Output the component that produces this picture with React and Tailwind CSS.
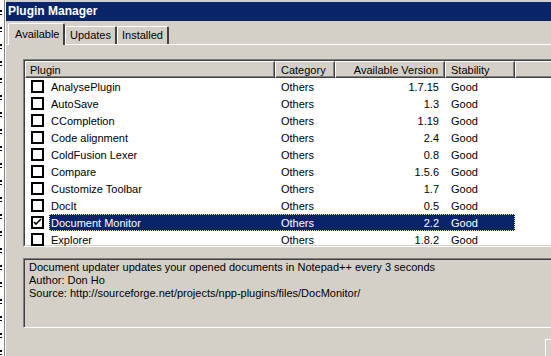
const plugins = [
  { name: "AnalysePlugin", version: "1.7.15" },
  { name: "AutoSave", version: "1.3" },
  { name: "CCompletion", version: "1.19" },
  { name: "Code alignment", version: "2.4" },
  { name: "ColdFusion Lexer", version: "0.8" },
  { name: "Compare", version: "1.5.6" },
  { name: "Customize Toolbar", version: "1.7" },
  { name: "DocIt", version: "0.5" },
  { name: "Document Monitor", version: "2.2", checked: true, selected: true },
  { name: "Explorer", version: "1.8.2" },
];

function CheckBox({ checked }) {
  return (
    <div className="w-[13px] h-[13px] border-2 border-black bg-white flex items-center justify-center">
      {checked && (
        <svg width="9" height="9" viewBox="0 0 9 9">
          <path d="M1 4 L3 6 L8 1" stroke="#000" strokeWidth="1.6" fill="none" />
        </svg>
      )}
    </div>
  );
}

function HeaderCell({ children, className = "" }) {
  return (
    <div
      className={
        "h-full flex items-center pt-[1px] border-t border-l border-t-white border-l-white border-r border-b border-r-[#404040] border-b-[#404040] shadow-[inset_-1px_-1px_0_#808080] " +
        className
      }
    >
      {children}
    </div>
  );
}

function Tab({ label, active }) {
  return active ? (
    <div className="relative z-10 h-[22px] -mb-[1px] w-[57px] bg-[#d4d0c8] border-t border-l border-white border-r-2 border-r-[#404040] rounded-t-[2px] flex items-start pt-[4px] pl-[6px]">
      {label}
    </div>
  ) : (
    <div className="h-[18px] bg-[#d4d0c8] border-t border-l border-white border-r-2 border-r-[#404040] rounded-t-[2px] flex items-center px-[4px]">
      {label}
    </div>
  );
}

export default function App() {
  return (
    <div
      className="w-[551px] h-[356px] overflow-hidden bg-[#d4d0c8] flex text-[11px] leading-[13px] text-black"
      style={{ fontFamily: '"Liberation Sans", Arial, sans-serif' }}
    >
      <div className="w-[4px] shrink-0 bg-white bg-[repeating-linear-gradient(to_bottom,transparent_0,transparent_10px,#000_10px,#000_12px,transparent_12px,transparent_14px,#000_14px,#000_15px,transparent_15px,transparent_17px)] bg-[length:2px_100%] bg-no-repeat" />
      <div className="w-[1px] shrink-0 bg-[#808080]" />
      <div className="w-[1px] shrink-0 bg-white" />
      <div className="flex-1 flex flex-col min-w-0 pt-[2px]">
        <div className="h-[19px] bg-[#0a246a] text-white font-bold text-[12px] flex items-center pl-[2px] shrink-0">
          Plugin Manager
        </div>
        <div className="h-[23px] flex items-end pl-[2px] shrink-0">
          <Tab label="Available" active />
          <Tab label="Updates" />
          <Tab label="Installed" />
        </div>
        <div className="border-t border-white flex-1 flex flex-col pl-[17px] pt-[14px]">
          <div className="w-[560px] h-[188px] border-t border-l border-[#808080] border-b border-r border-b-white border-r-white shrink-0">
            <div className="h-full border-t border-l border-[#404040] border-b border-r border-b-[#d4d0c8] border-r-[#d4d0c8] bg-white flex flex-col">
              <div className="h-[17px] flex shrink-0 bg-[#d4d0c8]">
                <HeaderCell className="w-[250px] pl-[4px]">Plugin</HeaderCell>
                <HeaderCell className="w-[60px] pl-[5px]">Category</HeaderCell>
                <HeaderCell className="w-[110px] justify-end pr-[6px]">Available Version</HeaderCell>
                <HeaderCell className="w-[70px] pl-[5px]">Stability</HeaderCell>
                <HeaderCell className="flex-1" />
              </div>
              {plugins.map((p) => (
                <div key={p.name} className="h-[17px] flex items-center shrink-0">
                  <div className="w-[24px] h-full flex items-center pl-[6px] shrink-0">
                    <CheckBox checked={p.checked} />
                  </div>
                  <div
                    className={
                      "w-[466px] h-full flex items-center pt-[1px] " +
                      (p.selected
                        ? "bg-[#0a246a] text-white outline-1 outline-dotted outline-[#e8e0a0] -outline-offset-1"
                        : "")
                    }
                  >
                    <div className="w-[226px] pl-[2px]">{p.name}</div>
                    <div className="w-[60px] pl-[6px]">Others</div>
                    <div className="w-[110px] text-right pr-[6px]">{p.version}</div>
                    <div className="w-[70px] pl-[6px]">Good</div>
                  </div>
                </div>
              ))}
            </div>
          </div>
          <div className="mt-[11px] w-[560px] h-[70px] border-t border-l border-[#808080] border-b border-r border-b-white border-r-white shrink-0">
            <div className="h-full border-t border-l border-[#404040] pl-[4px] pt-[1px]">
              <div>Document updater updates your opened documents in Notepad++ every 3 seconds</div>
              <div>Author: Don Ho</div>
              <div>Source: http://sourceforge.net/projects/npp-plugins/files/DocMonitor/</div>
            </div>
          </div>
          <div className="mt-[11px] ml-[522px] w-[40px] h-[20px] border-t border-l border-white shrink-0" />
        </div>
      </div>
    </div>
  );
}
